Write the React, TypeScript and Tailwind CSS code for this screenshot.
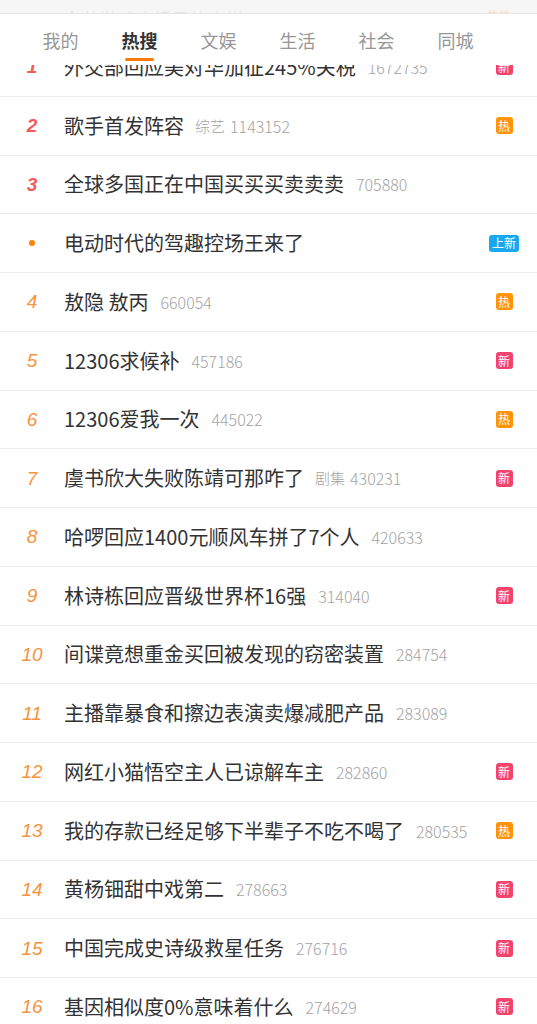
import React from "react";

type Badge = "new" | "hot" | "fresh" | null;
type Row = { rank: string; title: string; label?: string; count?: string; badge: Badge };

const rows: Row[] = [
  { rank: "1", title: "外交部回应美对华加征245%关税", count: "1672735", badge: "new" },
  { rank: "2", title: "歌手首发阵容", label: "综艺", count: "1143152", badge: "hot" },
  { rank: "3", title: "全球多国正在中国买买买卖卖卖", count: "705880", badge: null },
  { rank: "•", title: "电动时代的驾趣控场王来了", badge: "fresh" },
  { rank: "4", title: "敖隐 敖丙", count: "660054", badge: "hot" },
  { rank: "5", title: "12306求候补", count: "457186", badge: "new" },
  { rank: "6", title: "12306爱我一次", count: "445022", badge: "hot" },
  { rank: "7", title: "虞书欣大失败陈靖可那咋了", label: "剧集", count: "430231", badge: "new" },
  { rank: "8", title: "哈啰回应1400元顺风车拼了7个人", count: "420633", badge: null },
  { rank: "9", title: "林诗栋回应晋级世界杯16强", count: "314040", badge: "new" },
  { rank: "10", title: "间谍竟想重金买回被发现的窃密装置", count: "284754", badge: null },
  { rank: "11", title: "主播靠暴食和擦边表演卖爆减肥产品", count: "283089", badge: null },
  { rank: "12", title: "网红小猫悟空主人已谅解车主", count: "282860", badge: "new" },
  { rank: "13", title: "我的存款已经足够下半辈子不吃不喝了", count: "280535", badge: "hot" },
  { rank: "14", title: "黄杨钿甜中戏第二", count: "278663", badge: "new" },
  { rank: "15", title: "中国完成史诗级救星任务", count: "276716", badge: "new" },
  { rank: "16", title: "基因相似度0%意味着什么", count: "274629", badge: "new" },
];

const tabs = ["我的", "热搜", "文娱", "生活", "社会", "同城"];

function BadgeEl({ b }: { b: Badge }) {
  if (b === "new")
    return (
      <span className="flex h-[17px] w-[17px] items-center justify-center rounded-[3px] bg-[#f2436d] text-[12px] leading-none text-white">
        新
      </span>
    );
  if (b === "hot")
    return (
      <span className="flex h-[17px] w-[17px] items-center justify-center rounded-[3px] bg-[#ff9406] text-[12px] leading-none text-white">
        热
      </span>
    );
  if (b === "fresh")
    return (
      <span className="flex h-[17px] w-[30px] items-center justify-center rounded-[3px] bg-[#17a8f0] text-[12px] leading-none text-white">
        上新
      </span>
    );
  return null;
}

function Rank({ r }: { r: string }) {
  if (r === "•") return <span className="h-[6px] w-[6px] rounded-full bg-[#ff8200]" />;
  const top = r === "1" || r === "2" || r === "3";
  return (
    <span
      className={
        top
          ? "text-[19px] font-bold italic leading-none text-[#f5595c]"
          : "text-[19px] italic leading-none text-[#f7933c]"
      }
      style={{ fontFamily: '"Liberation Sans", Arial, sans-serif' }}
    >
      {r}
    </span>
  );
}

export default function App() {
  return (
    <div
      className="h-[1024px] w-[537px] overflow-hidden bg-white"
      style={{ fontFamily: '"Noto Sans CJK SC", "Noto Sans", sans-serif' }}
    >
      <div className="flex h-[14px] items-end overflow-hidden border-b border-[#e4e4e4] bg-[#f6f6f6] pl-[64px] pr-[26px] opacity-[0.9]">
        <span className="block h-[4px] overflow-hidden text-[18px] leading-[20px] text-[#333] opacity-[0.1]">
          女装游戏直播风格穿搭
        </span>
        <span className="ml-auto block h-[4px] overflow-hidden text-[12px] leading-[14px] text-[#ff9406] opacity-[0.3]">
          热热
        </span>
      </div>
      <div className="flex h-[51px] bg-white px-[21px]">
        {tabs.map((t, i) => (
          <div key={t} className="flex h-full w-[79px] flex-col items-center pt-[17px]">
            <span
              className={
                i === 1
                  ? "text-[18px] font-bold leading-[18px] text-[#333]"
                  : "text-[18px] leading-[18px] text-[#969696]"
              }
            >
              {t}
            </span>
            {i === 1 && <span className="mt-[9px] h-[3px] w-[29px] rounded-full bg-[#ff7a00]" />}
          </div>
        ))}
      </div>
      <div className="overflow-hidden">
        {rows.map((row, idx) => (
          <div
            key={idx}
            className={
              "flex h-[58.75px] items-center border-b border-[#ececec] pr-[13px]" +
              (idx === 0 ? " mt-[-27px]" : "")
            }
          >
            <div className="flex w-[64px] shrink-0 items-center justify-center">
              <Rank r={row.rank} />
            </div>
            <span className="whitespace-nowrap text-[20px] leading-[24px] text-[#333]">{row.title}</span>
            {row.label && (
              <span className="ml-[11px] whitespace-nowrap text-[15px] font-light leading-[20px] text-[#a3a3a3]">
                {row.label}
              </span>
            )}
            {row.count && (
              <span
                className={
                  (row.label ? "ml-[5px]" : "ml-[12px]") +
                  " whitespace-nowrap text-[16px] font-light leading-[20px] text-[#a3a3a3]"
                }
              >
                {row.count}
              </span>
            )}
            <div className="ml-auto flex w-[40px] shrink-0 justify-center">
              <BadgeEl b={row.badge} />
            </div>
          </div>
        ))}
      </div>
    </div>
  );
}
